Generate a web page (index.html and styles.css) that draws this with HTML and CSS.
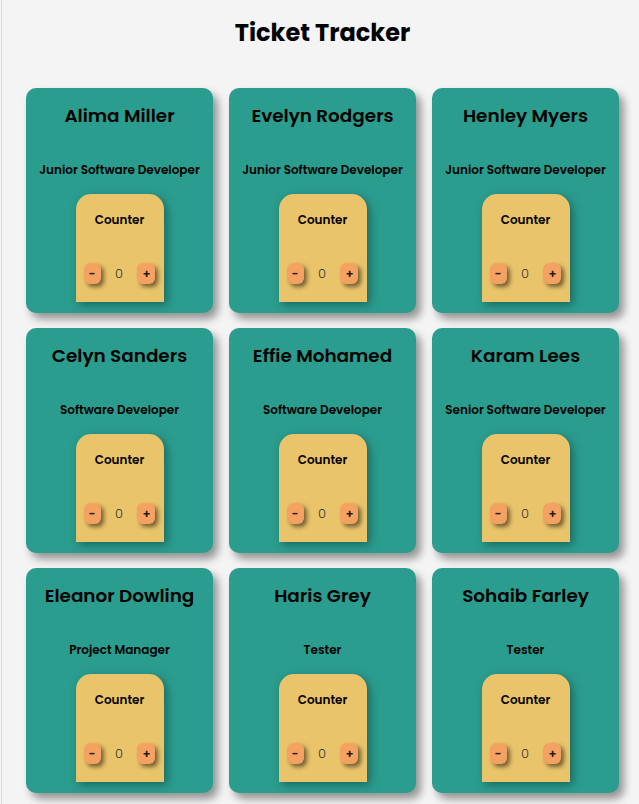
FILE: index.html
```html
<!DOCTYPE html>
<html lang="en">
<head>
<meta charset="utf-8">
<title>Ticket Tracker</title>
<link rel="stylesheet" href="styles.css">
</head>
<body>
<div class="page">
  <h1 class="title">Ticket Tracker</h1>
  <main class="grid">
    <section class="card">
      <h2 class="name">Alima Miller</h2>
      <p class="role">Junior Software Developer</p>
      <div class="counter">
        <h3 class="counter-title">Counter</h3>
        <div class="counter-row"><button class="btn">-</button><span class="count">0</span><button class="btn">+</button></div>
      </div>
    </section>
    <section class="card">
      <h2 class="name">Evelyn Rodgers</h2>
      <p class="role">Junior Software Developer</p>
      <div class="counter">
        <h3 class="counter-title">Counter</h3>
        <div class="counter-row"><button class="btn">-</button><span class="count">0</span><button class="btn">+</button></div>
      </div>
    </section>
    <section class="card">
      <h2 class="name">Henley Myers</h2>
      <p class="role">Junior Software Developer</p>
      <div class="counter">
        <h3 class="counter-title">Counter</h3>
        <div class="counter-row"><button class="btn">-</button><span class="count">0</span><button class="btn">+</button></div>
      </div>
    </section>
    <section class="card">
      <h2 class="name">Celyn Sanders</h2>
      <p class="role">Software Developer</p>
      <div class="counter">
        <h3 class="counter-title">Counter</h3>
        <div class="counter-row"><button class="btn">-</button><span class="count">0</span><button class="btn">+</button></div>
      </div>
    </section>
    <section class="card">
      <h2 class="name">Effie Mohamed</h2>
      <p class="role">Software Developer</p>
      <div class="counter">
        <h3 class="counter-title">Counter</h3>
        <div class="counter-row"><button class="btn">-</button><span class="count">0</span><button class="btn">+</button></div>
      </div>
    </section>
    <section class="card">
      <h2 class="name">Karam Lees</h2>
      <p class="role">Senior Software Developer</p>
      <div class="counter">
        <h3 class="counter-title">Counter</h3>
        <div class="counter-row"><button class="btn">-</button><span class="count">0</span><button class="btn">+</button></div>
      </div>
    </section>
    <section class="card">
      <h2 class="name">Eleanor Dowling</h2>
      <p class="role">Project Manager</p>
      <div class="counter">
        <h3 class="counter-title">Counter</h3>
        <div class="counter-row"><button class="btn">-</button><span class="count">0</span><button class="btn">+</button></div>
      </div>
    </section>
    <section class="card">
      <h2 class="name">Haris Grey</h2>
      <p class="role">Tester</p>
      <div class="counter">
        <h3 class="counter-title">Counter</h3>
        <div class="counter-row"><button class="btn">-</button><span class="count">0</span><button class="btn">+</button></div>
      </div>
    </section>
    <section class="card">
      <h2 class="name">Sohaib Farley</h2>
      <p class="role">Tester</p>
      <div class="counter">
        <h3 class="counter-title">Counter</h3>
        <div class="counter-row"><button class="btn">-</button><span class="count">0</span><button class="btn">+</button></div>
      </div>
    </section>
  </main>
</div>
</body>
</html>
```
FILE: styles.css
```css
html, body {
  margin: 0;
  padding: 0;
  background: #f4f4f4;
}

body {
  font-family: Poppins, Inter, "Noto Sans", sans-serif;
  color: #000;
}

.page {
  margin-left: 1px;
  border-left: 1px solid #dcdcdc;
  min-height: 804px;
  padding: 13px 0 0 24px;
}

.title {
  margin: 0;
  width: 593px;
  text-align: center;
  font-size: 24px;
  line-height: 39px;
  font-weight: 700;
}

.grid {
  margin-top: 36px;
  display: grid;
  grid-template-columns: repeat(3, 187px);
  column-gap: 16px;
  row-gap: 15px;
}

.card {
  height: 225px;
  box-sizing: border-box;
  padding-top: 16px;
  background: #2a9d8f;
  border-radius: 10px;
  box-shadow: 5px 6px 8px rgba(0, 0, 0, 0.4);
  display: flex;
  flex-direction: column;
  align-items: center;
}

.name {
  margin: 0;
  font-size: 18.4px;
  line-height: 24px;
  font-weight: 600;
}

.role {
  margin: 34px 0 0;
  font-size: 12px;
  line-height: 16px;
  font-weight: 600;
}

.counter {
  margin-top: 16px;
  width: 88px;
  height: 108px;
  box-sizing: border-box;
  padding-top: 18px;
  background: #e9c46a;
  border-radius: 15px 15px 0 0;
  box-shadow: 3px 3px 10px rgba(0, 0, 0, 0.35);
  display: flex;
  flex-direction: column;
  align-items: center;
}

.counter-title {
  margin: 0;
  font-size: 12px;
  line-height: 16px;
  font-weight: 600;
}

.counter-row {
  margin-top: 35px;
  width: 100%;
  box-sizing: border-box;
  padding: 0 8px;
  display: flex;
  justify-content: space-between;
  align-items: center;
}

.btn {
  height: 21px;
  padding: 0 5px;
  border: none;
  border-radius: 6px;
  background: #f4a261;
  box-shadow: 3px 3px 4px rgba(0, 0, 0, 0.5);
  font-family: inherit;
  font-size: 12px;
  font-weight: 600;
  color: #2a1a10;
  line-height: 21px;
}

.count {
  font-size: 13px;
  font-weight: 300;
  color: #333;
}
```
